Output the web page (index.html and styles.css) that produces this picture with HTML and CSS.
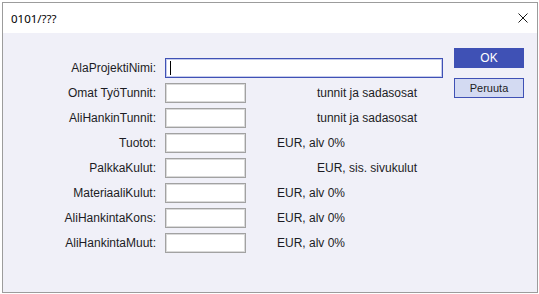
FILE: index.html
```html
<!DOCTYPE html>
<html lang="fi">
  <head>
    <meta charset="UTF-8" />
    <meta name="viewport" content="width=device-width, initial-scale=1.0" />
    <title>0101/???</title>
    <link rel="stylesheet" href="styles.css">
  </head>
  <body>
    <div class="window">
      <!-- Title bar -->
      <div class="titlebar">
        <span class="title">0101/???</span>
        <svg class="close" width="10" height="10" viewBox="0 0 10 10">
          <path d="M0.5 0.5 L9.5 9.5 M9.5 0.5 L0.5 9.5" stroke="#1a1a1a" stroke-width="1" fill="none" />
        </svg>
      </div>

      <div class="content">
        <!-- Fields -->
        <div class="form">
          <div class="label">AlaProjektiNimi:</div>
          <div class="field wide focused"><span class="caret"></span></div>

          <div class="label">Omat TyöTunnit:</div>
          <div class="field"></div>
          <div class="note right">tunnit ja sadasosat</div>

          <div class="label">AliHankinTunnit:</div>
          <div class="field"></div>
          <div class="note right">tunnit ja sadasosat</div>

          <div class="label">Tuotot:</div>
          <div class="field"></div>
          <div class="note">EUR, alv 0%</div>

          <div class="label">PalkkaKulut:</div>
          <div class="field"></div>
          <div class="note right">EUR, sis. sivukulut</div>

          <div class="label">MateriaaliKulut:</div>
          <div class="field"></div>
          <div class="note">EUR, alv 0%</div>

          <div class="label">AliHankintaKons:</div>
          <div class="field"></div>
          <div class="note">EUR, alv 0%</div>

          <div class="label">AliHankintaMuut:</div>
          <div class="field"></div>
          <div class="note">EUR, alv 0%</div>
        </div>

        <!-- Buttons -->
        <div class="buttons">
          <button class="btn primary">OK</button>
          <button class="btn">Peruuta</button>
        </div>
      </div>
    </div>
  </body>
</html>
```

FILE: styles.css
```css
body {
  margin: 0;
  background: white;
  font-family: "Liberation Sans", Arial, sans-serif;
  font-size: 12px;
  color: #1c1c24;
}
.window {
  margin: 2px;
  width: 536px;
  height: 291px;
  box-sizing: border-box;
  border: 1px solid #9c9c9c;
  background: #f0f0f8;
  display: flex;
  flex-direction: column;
}
.titlebar {
  height: 30px;
  flex: none;
  background: white;
  display: flex;
  align-items: center;
  justify-content: space-between;
  padding: 0 9px 0 8px;
}
.title {
  font-family: "Noto Sans", "Open Sans", sans-serif;
  font-size: 11.5px;
  color: #000;
}
.close {
  display: block;
}
.content {
  display: flex;
  align-items: flex-start;
  gap: 11px;
  padding: 15px 12px 0 0;
}
.form {
  margin-top: 10px;
  display: grid;
  grid-template-columns: 162px 81px 31px 140px 26px;
  grid-auto-rows: 20px;
  row-gap: 5px;
}
.label {
  grid-column: 1;
  text-align: right;
  padding-right: 9px;
  line-height: 20px;
}
.field {
  grid-column: 2;
  position: relative;
  background: white;
  border: 1px solid #a2a2a2;
  box-shadow: inset 0 0 0 1px #dadada;
}
.field.wide {
  grid-column: 2 / 6;
}
.field.focused {
  border-color: #3f51b5;
  box-shadow: inset 0 0 0 1px #c4cbec;
}
.caret {
  position: absolute;
  left: 4px;
  top: 2px;
  width: 1px;
  height: 14px;
  background: black;
}
.note {
  grid-column: 4;
  line-height: 20px;
  white-space: nowrap;
}
.note.right {
  text-align: right;
}
.buttons {
  display: flex;
  flex-direction: column;
  gap: 10px;
}
.btn {
  width: 70px;
  height: 20px;
  padding: 0;
  font-family: "Liberation Sans", Arial, sans-serif;
  font-size: 11px;
  color: #1c1c24;
  background: #d3daf2;
  border: 1px solid #3f51b5;
}
.btn.primary {
  background: #3f51b5;
  color: white;
  font-size: 12px;
}
```
